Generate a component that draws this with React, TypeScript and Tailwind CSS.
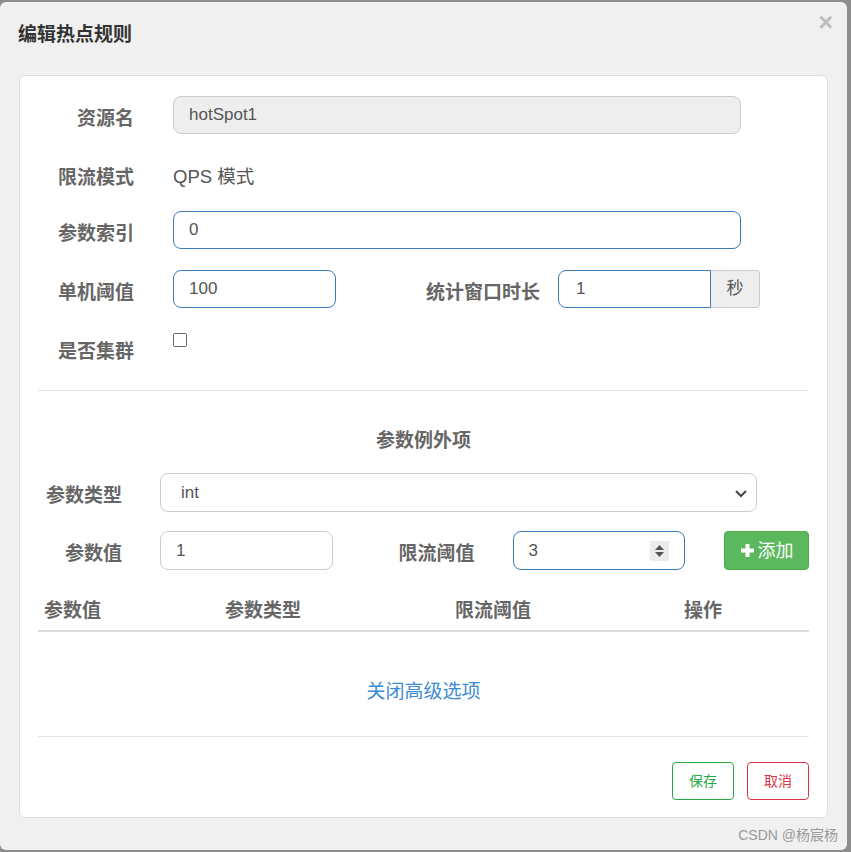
import React from "react";

const font = { fontFamily: '"Liberation Sans", "Noto Sans CJK SC", sans-serif' };

function Label({ w, children }: { w: string; children: React.ReactNode }) {
  return (
    <div className={`${w} shrink-0 text-right pt-[10px] text-[19px] leading-[26px] font-bold text-[#666]`}>{children}</div>
  );
}

export default function App() {
  return (
    <div className="w-[851px] h-[852px] bg-[#8d8d8d] overflow-hidden relative" style={font}>
      <div className="absolute top-[2px] left-0 w-[847px] h-[848px] bg-[#f0f0f0] rounded-[6px]">
        {/* header */}
        <div className="flex items-start justify-between pl-[18px] pr-[14px] pt-[20px] h-[73px]">
          <div className="text-[19px] leading-[26px] font-bold text-[#333]">编辑热点规则</div>
          <div className="text-[25px] leading-[24px] font-bold text-[#bdbdbd] -mt-[12px]">×</div>
        </div>
        {/* card */}
        <div className="ml-[19px] w-[809px] h-[743px] bg-white border border-[#dedede] rounded-[6px] px-[18px] pt-[20px]">
          {/* row 1 */}
          <div className="flex h-[38px] mb-[21px]">
            <Label w="w-[96px]">资源名</Label>
            <div className="ml-[39px] w-[568px] h-[38px] bg-[#eeeeee] border border-[#cccccc] rounded-[8px] pl-[15px] text-[17px] leading-[36px] text-[#555]">hotSpot1</div>
          </div>
          {/* row 2 */}
          <div className="flex h-[35px] mb-[21px]">
            <Label w="w-[96px]">限流模式</Label>
            <div className="ml-[39px] pt-[9px] text-[18.5px] leading-[26px] text-[#555]">QPS 模式</div>
          </div>
          {/* row 3 */}
          <div className="flex h-[38px] mb-[21px]">
            <Label w="w-[96px]">参数索引</Label>
            <div className="ml-[39px] w-[568px] h-[38px] bg-white border border-[#3a7bbf] rounded-[8px] pl-[15px] text-[17px] leading-[36px] text-[#555]">0</div>
          </div>
          {/* row 4 */}
          <div className="flex h-[38px] mb-[21px]">
            <Label w="w-[96px]">单机阈值</Label>
            <div className="ml-[39px] w-[163px] h-[38px] bg-white border border-[#3a7bbf] rounded-[8px] pl-[15px] text-[17px] leading-[36px] text-[#555]">100</div>
            <Label w="w-[204px]">统计窗口时长</Label>
            <div className="ml-[18px] flex h-[38px]">
              <div className="w-[153px] h-[38px] bg-white border border-[#3a7bbf] rounded-l-[8px] pl-[17px] text-[17px] leading-[36px] text-[#555]">1</div>
              <div className="w-[49px] h-[38px] bg-[#eeeeee] border border-l-0 border-[#cccccc] rounded-r-[4px] text-center text-[17px] leading-[36px] text-[#555]">秒</div>
            </div>
          </div>
          {/* row 5 */}
          <div className="flex h-[38px]">
            <Label w="w-[96px]">是否集群</Label>
            <div className="ml-[39px] mt-[4px] w-[14px] h-[14px] border border-[#666] rounded-[2px] bg-white" />
          </div>
          <div className="mt-[23px] h-px bg-[#e5e5e5]" />
          {/* heading */}
          <div className="mt-[37px] text-center text-[19px] leading-[26px] font-bold text-[#666]">参数例外项</div>
          {/* select row */}
          <div className="flex h-[39px] mt-[19px]">
            <Label w="w-[84px]">参数类型</Label>
            <div className="ml-[38px] w-[597px] h-[39px] bg-white border border-[#cccccc] rounded-[8px] pl-[20px] pr-[8px] flex items-center justify-between text-[17px] text-[#555]">
              <span className="leading-[37px]">int</span>
              <svg width="14" height="10" viewBox="0 0 14 10">
                <path d="M2 3 L7 8 L12 3" fill="none" stroke="#444" strokeWidth="2" />
              </svg>
            </div>
          </div>
          {/* value row */}
          <div className="flex h-[39px] mt-[19px]">
            <Label w="w-[84px]">参数值</Label>
            <div className="ml-[38px] w-[173px] h-[39px] bg-white border border-[#cccccc] rounded-[8px] pl-[15px] text-[17px] leading-[37px] text-[#555]">1</div>
            <Label w="w-[142px]">限流阈值</Label>
            <div className="ml-[38px] w-[173px] h-[39px] bg-white border border-[#3a7bbf] rounded-[8px] pl-[15px] pr-[15px] flex items-center justify-between text-[17px] text-[#555]">
              <span className="leading-[37px]">3</span>
              <div className="w-[19px] h-[20px] bg-[#ececec] flex items-center justify-center">
                <svg width="11" height="14" viewBox="0 0 11 14">
                  <path d="M5.5 1 L10 6 L1 6 Z" fill="#555" />
                  <path d="M1 8 L10 8 L5.5 13 Z" fill="#555" />
                </svg>
              </div>
            </div>
            <div className="ml-[39px] w-[85px] h-[39px] bg-[#5cb85c] border border-[#4cae4c] rounded-[4px] flex items-center justify-center gap-[3px] text-white text-[18px]">
              <svg width="15" height="15" viewBox="0 0 15 15">
                <path d="M7.5 1 V14 M1 7.5 H14" stroke="#fff" strokeWidth="4" />
              </svg>
              <span className="leading-[26px]">添加</span>
            </div>
          </div>
          {/* table */}
          <div className="mt-[18px] flex border-b-2 border-[#dddddd] text-[19px] leading-[26px] font-bold text-[#666] pt-[10px] pb-[6px]">
            <div className="w-[181px] pl-[6px]">参数值</div>
            <div className="w-[230px] pl-[6px]">参数类型</div>
            <div className="w-[229px] pl-[6px]">限流阈值</div>
            <div className="flex-1 pl-[6px]">操作</div>
          </div>
          <div className="mt-[47px] text-center text-[19px] leading-[26px] text-[#3d8bd2]">关闭高级选项</div>
          <div className="mt-[31px] h-px bg-[#e5e5e5]" />
          <div className="mt-[25px] flex justify-end gap-[13px]">
            <div className="w-[62px] h-[38px] border border-[#28a745] rounded-[4px] text-center text-[14px] leading-[36px] text-[#28a745]">保存</div>
            <div className="w-[62px] h-[38px] border border-[#dc3545] rounded-[4px] text-center text-[14px] leading-[36px] text-[#dc3545]">取消</div>
          </div>
        </div>
        <div className="absolute right-[9px] bottom-[6px] text-[14px] leading-[18px] text-[#9a9a9a]">CSDN @杨宸杨</div>
      </div>
    </div>
  );
}
